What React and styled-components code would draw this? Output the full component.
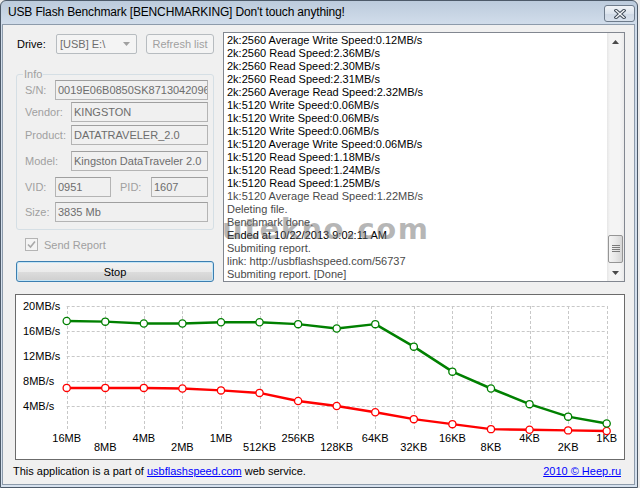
import React from 'react'
import styled, { createGlobalStyle } from 'styled-components'

const GlobalStyle = createGlobalStyle`
  html, body {
    margin: 0;
    padding: 0;
    background: #ececec;
  }
  body {
    font-family: "Liberation Sans", Arial, sans-serif;
    font-size: 11px;
    color: #000;
  }
`

const logLines = [
  { text: '2k:2560 Average Write Speed:0.12MB/s' },
  { text: '2k:2560 Read Speed:2.36MB/s' },
  { text: '2k:2560 Read Speed:2.30MB/s' },
  { text: '2k:2560 Read Speed:2.31MB/s' },
  { text: '2k:2560 Average Read Speed:2.32MB/s' },
  { text: '1k:5120 Write Speed:0.06MB/s' },
  { text: '1k:5120 Write Speed:0.06MB/s' },
  { text: '1k:5120 Write Speed:0.06MB/s' },
  { text: '1k:5120 Average Write Speed:0.06MB/s' },
  { text: '1k:5120 Read Speed:1.18MB/s' },
  { text: '1k:5120 Read Speed:1.24MB/s' },
  { text: '1k:5120 Read Speed:1.25MB/s' },
  { text: '1k:5120 Average Read Speed:1.22MB/s', dim: true },
  { text: 'Deleting file.', dim: true },
  { text: 'Benchmark done.', dim: true },
  { text: 'Ended at 10/22/2013 9:02:11 AM' },
  { text: 'Submiting report.', dim: true },
  { text: 'link: http://usbflashspeed.com/56737', dim: true },
  { text: 'Submiting report. [Done]', dim: true },
]

const sizes = ['16MB', '8MB', '4MB', '2MB', '1MB', '512KB', '256KB', '128KB', '64KB', '32KB', '16KB', '8KB', '4KB', '2KB', '1KB']
const readSpeed = [17.6, 17.5, 17.2, 17.2, 17.4, 17.4, 17.1, 16.4, 17.1, 13.5, 9.5, 6.8, 4.3, 2.3, 1.2]
const writeSpeed = [6.9, 6.9, 6.9, 6.8, 6.5, 6.1, 4.8, 4.0, 3.0, 1.9, 1.1, 0.3, 0.2, 0.1, 0.0]

const X0 = 50.7
const STEP = 38.57
const Y0 = 136
const K = 6.25
const xAt = (i) => X0 + i * STEP
const yAt = (v) => Y0 - v * K

const Window = styled.div`
  box-sizing: border-box;
  width: 638px;
  height: 488px;
  border: 1px solid #4d5a69;
  border-radius: 6px 6px 0 0;
  background: linear-gradient(#bccbdc, #d0dcea 22px, #d6e1ee);
  padding: 0 2px 2px 1px;
  display: flex;
  flex-direction: column;
`

const TitleBar = styled.div`
  height: 23px;
  display: flex;
  align-items: flex-start;
  justify-content: space-between;
  padding-left: 6px;
`

const Title = styled.span`
  font-size: 12px;
  letter-spacing: -0.15px;
  line-height: 23px;
  color: #000;
`

const CloseBtn = styled.div`
  box-sizing: border-box;
  width: 31px;
  height: 17px;
  margin-top: 4px;
  border: 1px solid #6d7b8b;
  border-radius: 3px;
  background: linear-gradient(#f1f4f8, #dde5ee 50%, #cfd9e6 51%, #d8e1ec);
  display: flex;
  align-items: center;
  justify-content: center;
`

const Client = styled.div`
  flex: 1;
  background: #f0f0f0;
  border: 1px solid #8d9bab;
  padding: 0 9px 0 12px;
  display: flex;
  flex-direction: column;
`

const Top = styled.div`
  display: flex;
  gap: 9px;
  margin: 7px 0 0 1px;
  height: 250px;
`

const LeftCol = styled.div`
  width: 198px;
  padding-top: 2px;
  display: flex;
  flex-direction: column;
`

const DriveRow = styled.div`
  display: flex;
  align-items: center;
  height: 20px;
`

const DriveLabel = styled.span`
  width: 39px;
  padding-left: 1px;
`

const Combo = styled.div`
  box-sizing: border-box;
  width: 81px;
  height: 20px;
  margin-right: 9px;
  border: 1px solid #b7bcc0;
  border-radius: 2px;
  background: #f4f4f4;
  color: #6d6d6d;
  display: flex;
  align-items: center;
  justify-content: space-between;
  padding: 0 6px 0 3px;
`

const DisabledBtn = styled.div`
  box-sizing: border-box;
  width: 68px;
  height: 20px;
  border: 1px solid #b7bcc0;
  border-radius: 3px;
  background: #f4f4f4;
  color: #a0a0a0;
  display: flex;
  align-items: center;
  justify-content: center;
`

const GroupBox = styled.div`
  margin-top: 20px;
  border: 1px solid #d5dfe5;
  border-radius: 3px;
  padding: 0 5px 7px 8px;
  display: flex;
  flex-direction: column;
`

const Legend = styled.span`
  align-self: flex-start;
  height: 13px;
  line-height: 13px;
  margin: -7px 0 -6px -2px;
  padding: 0 1px;
  background: #f0f0f0;
  color: #a0a0a0;
`

const Row = styled.div`
  display: flex;
  align-items: center;
  margin-top: ${(p) => p.$mt}px;
`

const Label = styled.span`
  width: ${(p) => p.$w}px;
  padding-left: ${(p) => p.$pl || 0}px;
  box-sizing: border-box;
  color: #a0a0a0;
  flex-shrink: 0;
`

const Field = styled.div`
  box-sizing: border-box;
  height: 20px;
  ${(p) => (p.$w ? `width: ${p.$w}px;` : 'flex: 1;')}
  border: 1px solid #b4b4b4;
  border-top-color: #9f9f9f;
  background: #f0f0f0;
  color: #6d6d6d;
  padding-left: 2px;
  line-height: 18px;
  white-space: nowrap;
  overflow: hidden;
`

const CheckRow = styled.div`
  display: flex;
  align-items: center;
  margin: 8px 0 0 9px;
  height: 13px;
  color: #a0a0a0;
`

const CheckBox = styled.span`
  box-sizing: border-box;
  width: 13px;
  height: 13px;
  border: 1px solid #b4b4b4;
  background: #f4f4f4;
  margin-right: 6px;
  display: flex;
  align-items: center;
  justify-content: center;
`

const StopBtn = styled.div`
  box-sizing: border-box;
  margin-top: 10px;
  height: 21px;
  border: 1px solid #3c7fb1;
  border-radius: 3px;
  background: linear-gradient(#f2f2f2, #ebebeb 50%, #dddddd 51%, #cfcfcf);
  box-shadow: inset 0 0 0 1px #c4e5f6;
  display: flex;
  align-items: center;
  justify-content: center;
  color: #000;
`

const LogBox = styled.div`
  flex: 1;
  position: relative;
  border: 1px solid #828790;
  background: #fff;
  display: flex;
  overflow: hidden;
`

const LogText = styled.div`
  flex: 1;
  padding: 1px 0 0 3px;
`

const LogLine = styled.div`
  height: 13px;
  line-height: 13px;
  white-space: nowrap;
  color: ${(p) => (p.$dim ? '#4a4a4a' : '#000')};
`

const Watermark = styled.div`
  position: absolute;
  left: -2px;
  top: 182px;
  z-index: 2;
  font-family: "DejaVu Sans", sans-serif;
  font-weight: bold;
  font-size: 29px;
  line-height: 29px;
  letter-spacing: 1.5px;
  color: rgba(110, 110, 110, 0.5);
  pointer-events: none;
`

const ScrollBar = styled.div`
  width: 17px;
  display: flex;
  flex-direction: column;
  background: linear-gradient(to right, #e6e6e6, #f4f4f4 3px, #f4f4f4 13px, #ebebeb);
`

const ArrowBtn = styled.div`
  height: 17px;
  display: flex;
  align-items: center;
  justify-content: center;
`

const Track = styled.div`
  flex: 1;
  display: flex;
  flex-direction: column;
  justify-content: flex-end;
  padding-bottom: 1px;
`

const Thumb = styled.div`
  box-sizing: border-box;
  height: 28px;
  margin: 0 1px;
  border: 1px solid #959595;
  border-radius: 2px;
  background: linear-gradient(to right, #f4f4f4, #e8e8e8 50%, #d6d6d6);
  display: flex;
  align-items: center;
  justify-content: center;
`

const ChartBox = styled.div`
  box-sizing: border-box;
  margin-top: 12px;
  height: 166px;
  border: 1px solid #6b6b6b;
  background: #fff;
`

const Footer = styled.div`
  margin: 5px 0 0 -2px;
  padding-right: 4px;
  display: flex;
  justify-content: space-between;
  line-height: 13px;
`

const Link = styled.a`
  color: #0000ff;
  text-decoration: underline;
`

const Series = ({ data, color }) => (
  <g>
    <polyline
      points={data.map((v, i) => `${xAt(i)},${yAt(v)}`).join(' ')}
      fill="none"
      stroke={color}
      strokeWidth="2.5"
      strokeLinejoin="round"
    />
    {data.map((v, i) => (
      <circle key={i} cx={xAt(i)} cy={yAt(v)} r="3.6" fill="#fff" stroke={color} strokeWidth="1.3" />
    ))}
  </g>
)

const Chart = () => (
  <svg width="608" height="164" style={{ display: 'block' }} fontFamily="Liberation Sans, Arial, sans-serif" fontSize="11">
    {[4, 8, 12, 16, 20].map((v) => (
      <g key={v}>
        <line x1={X0} x2={xAt(14)} y1={yAt(v) + 0.5} y2={yAt(v) + 0.5} stroke="#c8c8c8" strokeDasharray="3 2" />
        <text x="7" y={yAt(v)} dominantBaseline="central">{v}MB/s</text>
      </g>
    ))}
    {sizes.map((s, i) => (
      <g key={s}>
        <line x1={Math.round(xAt(i)) + 0.5} x2={Math.round(xAt(i)) + 0.5} y1={yAt(20)} y2={Y0} stroke="#c8c8c8" strokeDasharray="3 2" />
        <text x={xAt(i)} y={i % 2 === 0 ? 143 : 152} textAnchor="middle" dominantBaseline="central">{s}</text>
      </g>
    ))}
    <Series data={writeSpeed} color="#ff0000" />
    <Series data={readSpeed} color="#008000" />
  </svg>
)

const App = () => {
  return (
    <>
      <GlobalStyle />
      <Window>
        <TitleBar>
          <Title>USB Flash Benchmark [BENCHMARKING] Don't touch anything!</Title>
          <CloseBtn>
            <svg width="12" height="10" viewBox="0 0 12 10">
              <path d="M2 1.5 L10 8.5 M10 1.5 L2 8.5" stroke="#3f4a57" strokeWidth="3.4" strokeLinecap="square" />
              <path d="M2 1.5 L10 8.5 M10 1.5 L2 8.5" stroke="#f4f6f8" strokeWidth="1.4" strokeLinecap="square" />
            </svg>
          </CloseBtn>
        </TitleBar>
        <Client>
          <Top>
            <LeftCol>
              <DriveRow>
                <DriveLabel>Drive:</DriveLabel>
                <Combo>
                  <span>[USB] E:\</span>
                  <svg width="7" height="4" viewBox="0 0 7 4">
                    <path d="M0 0 L7 0 L3.5 4 Z" fill="#a0a0a0" />
                  </svg>
                </Combo>
                <DisabledBtn>Refresh list</DisabledBtn>
              </DriveRow>
              <GroupBox>
                <Legend>Info</Legend>
                <Row $mt={5}>
                  <Label $w={30}>S/N:</Label>
                  <Field>0019E06B0850SK8713042096</Field>
                </Row>
                <Row $mt={2}>
                  <Label $w={46}>Vendor:</Label>
                  <Field>KINGSTON</Field>
                </Row>
                <Row $mt={3}>
                  <Label $w={46}>Product:</Label>
                  <Field>DATATRAVELER_2.0</Field>
                </Row>
                <Row $mt={6}>
                  <Label $w={46}>Model:</Label>
                  <Field>Kingston DataTraveler 2.0</Field>
                </Row>
                <Row $mt={6}>
                  <Label $w={30}>VID:</Label>
                  <Field $w={56}>0951</Field>
                  <Label $w={40} $pl={9}>PID:</Label>
                  <Field>1607</Field>
                </Row>
                <Row $mt={5}>
                  <Label $w={30}>Size:</Label>
                  <Field>3835 Mb</Field>
                </Row>
              </GroupBox>
              <CheckRow>
                <CheckBox>
                  <svg width="9" height="9" viewBox="0 0 9 9">
                    <path d="M1 4.5 L3.5 7 L8 1.5" fill="none" stroke="#a8a8a8" strokeWidth="1.6" />
                  </svg>
                </CheckBox>
                Send Report
              </CheckRow>
              <StopBtn>Stop</StopBtn>
            </LeftCol>
            <LogBox>
              <Watermark>utekno.com</Watermark>
              <LogText>
                {logLines.map((l, i) => (
                  <LogLine key={i} $dim={l.dim}>{l.text}</LogLine>
                ))}
              </LogText>
              <ScrollBar>
                <ArrowBtn>
                  <svg width="7" height="4" viewBox="0 0 7 4">
                    <path d="M0 4 L7 4 L3.5 0 Z" fill="#4a4a4a" />
                  </svg>
                </ArrowBtn>
                <Track>
                  <Thumb>
                    <svg width="8" height="8" viewBox="0 0 8 8">
                      <path d="M0 0.5 H8 M0 2.5 H8 M0 4.5 H8 M0 6.5 H8" stroke="#7a7a7a" strokeWidth="1" />
                    </svg>
                  </Thumb>
                </Track>
                <ArrowBtn>
                  <svg width="7" height="4" viewBox="0 0 7 4">
                    <path d="M0 0 L7 0 L3.5 4 Z" fill="#4a4a4a" />
                  </svg>
                </ArrowBtn>
              </ScrollBar>
            </LogBox>
          </Top>
          <ChartBox>
            <Chart />
          </ChartBox>
          <Footer>
            <span>
              This application is a part of <Link href="#">usbflashspeed.com</Link> web service.
            </span>
            <Link href="#">2010 © Heep.ru</Link>
          </Footer>
        </Client>
      </Window>
    </>
  )
}

export default App
